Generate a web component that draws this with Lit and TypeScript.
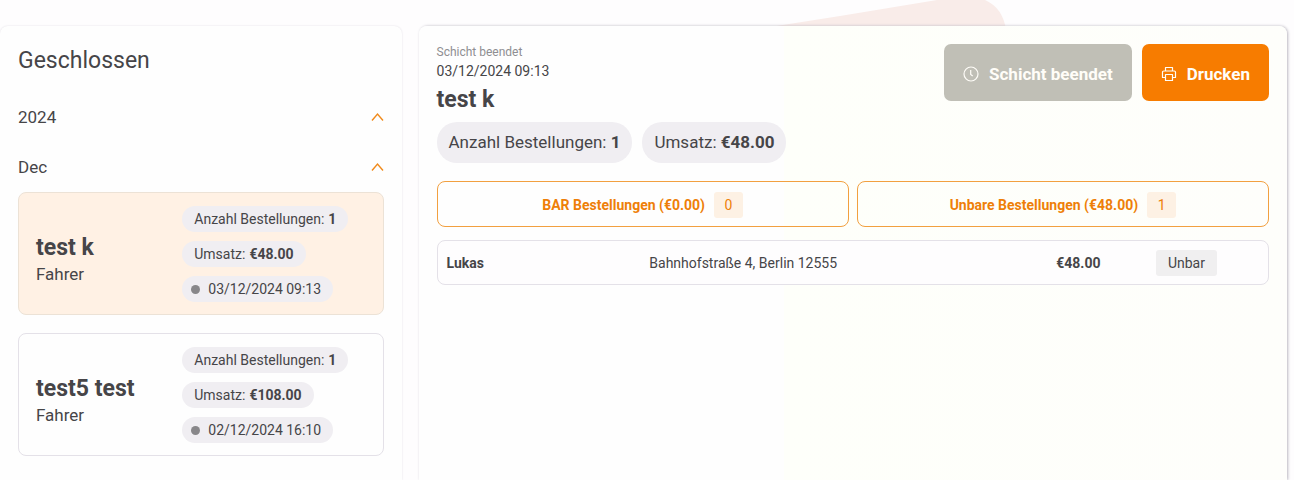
import { LitElement, html, css, svg } from "lit";
import { customElement, property, state } from "lit/decorators.js";
import { classMap } from "lit/directives/class-map.js";

interface Shift {
  name: string;
  role: string;
  orders: number;
  revenue: string;
  ended: string;
}

const SHIFTS: Shift[] = [
  { name: "test k", role: "Fahrer", orders: 1, revenue: "€48.00", ended: "03/12/2024 09:13" },
  { name: "test5 test", role: "Fahrer", orders: 1, revenue: "€108.00", ended: "02/12/2024 16:10" },
];

const reset = css`
  :host {
    display: block;
    font-family: Roboto, "Liberation Sans", sans-serif;
    color: #464548;
  }
  * {
    box-sizing: border-box;
  }
  h1, h2, h3, p {
    margin: 0;
  }
  button {
    font: inherit;
    color: inherit;
    cursor: pointer;
  }
`;

@customElement("shift-card")
class ShiftCard extends LitElement {
  @property({ attribute: false }) shift!: Shift;
  @property({ type: Boolean }) selected = false;

  static styles = [
    reset,
    css`
      .card {
        display: grid;
        grid-template-columns: 7fr 10fr;
        align-items: center;
        gap: 18px;
        width: 100%;
        padding: 13px 17px 12px;
        border: 1px solid #e4e1e8;
        border-radius: 8px;
        background: #fefefe;
        text-align: left;
      }
      .selected {
        background: #fff1e4;
        border-color: #ece2d6;
      }
      .who {
        display: grid;
        padding-top: 12px;
      }
      .name {
        font-size: 23px;
        font-weight: 700;
        line-height: 28px;
      }
      .role {
        font-size: 17px;
        line-height: 25px;
      }
      .facts {
        display: grid;
        justify-items: start;
        gap: 9px;
      }
      .pill {
        display: flex;
        align-items: center;
        gap: 4px;
        padding: 0 12px;
        border-radius: 13px;
        background: #f0eef2;
        font-size: 14px;
        line-height: 26px;
        white-space: nowrap;
      }
      .time {
        gap: 8px;
        padding: 0 12px 0 9px;
      }
      .dot {
        width: 9px;
        height: 9px;
        border-radius: 50%;
        background: #88878a;
      }
    `,
  ];

  render() {
    const s = this.shift;
    return html`
      <button class=${classMap({ card: true, selected: this.selected })} aria-pressed=${this.selected}>
        <span class="who">
          <span class="name">${s.name}</span>
          <span class="role">${s.role}</span>
        </span>
        <span class="facts">
          <span class="pill">Anzahl Bestellungen: <b>${s.orders}</b></span>
          <span class="pill">Umsatz: <b>${s.revenue}</b></span>
          <span class="pill time"><span class="dot"></span>${s.ended}</span>
        </span>
      </button>
    `;
  }
}

@customElement("app-root")
class AppRoot extends LitElement {
  @state() private current = 0;

  static styles = [
    reset,
    css`
      :host {
        position: relative;
        z-index: 0;
        min-height: 100vh;
        overflow: hidden;
        background: #fefdfe;
      }
      .backdrop {
        position: absolute;
        z-index: -1;
        top: 0;
        right: 288px;
      }
      .layout {
        display: grid;
        grid-template-columns: minmax(360px, 31.2%) 1fr;
        gap: 17px;
        min-height: 100vh;
        padding: 26px 7px 0 0;
      }
      .panel {
        padding: 18px;
        border-radius: 8px 8px 0 0;
        background: #fefefe;
        box-shadow: 0 0 2px #d3cfd8;
      }
      .list {
        padding: 18px 18px 24px;
        box-shadow: 0 0 2px #e0dde4;
      }
      .detail {
        background: linear-gradient(90deg, #fefefe 42%, #fefffa 42%, #fefefb);
        box-shadow: 1px 0 3px #bab7c0;
      }
      .title {
        margin-bottom: 14px;
        font-size: 23px;
        font-weight: 400;
        line-height: 34px;
      }
      .group {
        display: flex;
        align-items: center;
        justify-content: space-between;
        width: 100%;
        padding: 0;
        border: 0;
        background: none;
        font-size: 17px;
        line-height: 50px;
      }
      .cards {
        display: grid;
        gap: 18px;
      }
      .head {
        display: flex;
        align-items: flex-start;
        justify-content: space-between;
        gap: 16px;
      }
      .label {
        color: #8f8e92;
        font-size: 12px;
        line-height: 16px;
      }
      .date {
        font-size: 14px;
        line-height: 22px;
      }
      .driver {
        margin-bottom: 4px;
        font-size: 23px;
        font-weight: 700;
        line-height: 36px;
      }
      .pills {
        display: flex;
        flex-wrap: wrap;
        gap: 10px;
      }
      .pill {
        padding: 0 12px;
        border-radius: 20px;
        background: #f0eef2;
        font-size: 17px;
        line-height: 41px;
        white-space: nowrap;
      }
      .actions {
        display: flex;
        gap: 10px;
      }
      .action {
        display: flex;
        align-items: center;
        gap: 10px;
        height: 57px;
        padding: 2px 19px 0;
        border: 0;
        border-radius: 7px;
        background: #f77c00;
        color: #fffdf8;
        font-size: 17px;
        font-weight: 700;
        white-space: nowrap;
      }
      .action:disabled {
        background: #c0bfb6;
        cursor: default;
      }
      .tabs {
        display: grid;
        grid-template-columns: 1fr 1fr;
        gap: 8px;
        margin: 18px 0 13px;
      }
      .tab {
        display: flex;
        align-items: center;
        justify-content: center;
        gap: 9px;
        height: 46px;
        padding: 2px 12px 0;
        border: 1px solid #f2a040;
        border-radius: 8px;
        background: none;
        color: #ee7f08;
        font-size: 14px;
        font-weight: 700;
      }
      .count {
        min-width: 29px;
        border-radius: 3px;
        background: #fdf1e4;
        font-weight: 400;
        line-height: 26px;
      }
      .orders {
        width: 100%;
        table-layout: fixed;
        border: 1px solid #e4e1e8;
        border-radius: 8px;
        border-spacing: 0;
        background: #fefdfe;
        font-size: 14px;
      }
      .orders td {
        height: 43px;
        padding: 0;
      }
      .orders .customer {
        width: 25.5%;
        padding-left: 9px;
        font-weight: 700;
      }
      .address {
        width: 49%;
      }
      .price {
        width: 12%;
        font-weight: 700;
      }
      .tag {
        display: inline-block;
        padding: 0 12px;
        border-radius: 3px;
        background: #f0eff0;
        line-height: 26px;
      }
    `,
  ];

  private chevron() {
    return html`<svg width="13" height="10" viewBox="0 0 13 10" fill="none" stroke="#f08a1c" stroke-width="1.4" aria-hidden="true">
      ${svg`<path d="M1 8.5 6.5 2 12 8.5" />`}
    </svg>`;
  }

  render() {
    const s = SHIFTS[this.current];
    return html`
      <svg class="backdrop" width="236" height="60" viewBox="0 0 236 60" aria-hidden="true">
        <path d="M0 27 L70 16 L167 0 L215 0 Q233 8 236 30 L236 60 L0 60Z" fill="#f9ece9" />
      </svg>
      <main class="layout">
        <section class="panel list">
          <h1 class="title">Geschlossen</h1>
          <button class="group" aria-expanded="true">2024 ${this.chevron()}</button>
          <button class="group" aria-expanded="true">Dec ${this.chevron()}</button>
          <div class="cards">
            ${SHIFTS.map(
              (item, i) => html`<shift-card
                .shift=${item}
                .selected=${i === this.current}
                @click=${() => (this.current = i)}
              ></shift-card>`
            )}
          </div>
        </section>
        <section class="panel detail">
          <header class="head">
            <div>
              <p class="label">Schicht beendet</p>
              <p class="date">${s.ended}</p>
              <h2 class="driver">${s.name}</h2>
              <div class="pills">
                <span class="pill">Anzahl Bestellungen: <b>${s.orders}</b></span>
                <span class="pill">Umsatz: <b>${s.revenue}</b></span>
              </div>
            </div>
            <div class="actions">
              <button class="action" disabled>
                <svg width="16" height="16" viewBox="0 0 16 16" fill="none" stroke="currentColor" stroke-width="1.2" aria-hidden="true">
                  <circle cx="8" cy="8" r="7" />
                  <path d="M7.7 4v4.4l2 1.6" />
                </svg>
                Schicht beendet
              </button>
              <button class="action">
                <svg width="16" height="16" viewBox="0 0 16 16" fill="none" stroke="currentColor" stroke-width="1.2" stroke-linejoin="round" aria-hidden="true">
                  <path d="M4.5 5V1.5h7V5M4.5 11.5h-3V6.2Q1.5 5 2.7 5h10.6q1.2 0 1.2 1.2v5.3h-3" />
                  <path d="M4.5 8.5h7v6h-7z" />
                </svg>
                Drucken
              </button>
            </div>
          </header>
          <div class="tabs">
            <button class="tab">BAR Bestellungen (€0.00) <span class="count">0</span></button>
            <button class="tab">Unbare Bestellungen (€48.00) <span class="count">1</span></button>
          </div>
          <table class="orders">
            <tbody>
              <tr>
                <td class="customer">Lukas</td>
                <td class="address">Bahnhofstraße 4, Berlin 12555</td>
                <td class="price">€48.00</td>
                <td><span class="tag">Unbar</span></td>
              </tr>
            </tbody>
          </table>
        </section>
      </main>
    `;
  }
}
